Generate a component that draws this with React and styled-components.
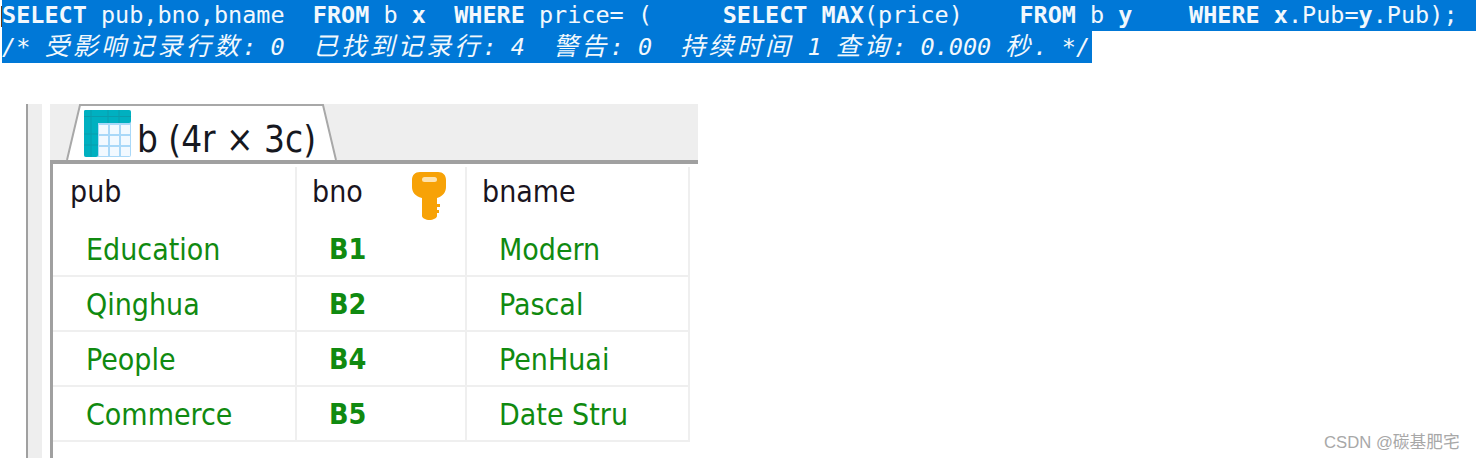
import React from "react";
import styled, { createGlobalStyle } from "styled-components";

const GlobalStyle = createGlobalStyle`
  html, body {
    margin: 0;
    padding: 0;
    background: #fff;
  }
  body {
    width: 1476px;
    height: 458px;
    overflow: hidden;
    position: relative;
  }
`;

const SqlBlock = styled.div`
  position: relative;
  padding-left: 2px;
  font-family: "DejaVu Sans Mono", "Noto Sans CJK SC", monospace;
  font-size: 23.47px;
  color: #f2f8fd;
  white-space: pre;
`;

const Caret = styled.div`
  position: absolute;
  left: 1px;
  top: 6px;
  width: 1px;
  height: 21px;
  background: #6b3a10;
`;

const SqlLine = styled.div`
  display: ${p => (p.$fit ? "table" : "block")};
  height: ${p => p.$h}px;
  line-height: ${p => p.$h}px;
  padding-right: ${p => (p.$fit ? 2 : 0)}px;
  background: #0078d7;
  font-style: ${p => (p.$comment ? "italic" : "normal")};
`;

const Keyword = styled.span`
  font-weight: bold;
`;

const Cjk = styled.span`
  font-family: "Noto Sans CJK SC", sans-serif;
  font-size: 25px;
  letter-spacing: 3.26px;
  line-height: 1;
`;

const Panel = styled.div`
  display: flex;
  margin: 41px 0 0 26px;
  height: 354px;
`;

const Rail = styled.div`
  width: 14px;
  margin-right: 8px;
  border-left: 2px solid #a0a0a0;
  background: #eeeeee;
`;

const Content = styled.div`
  width: 648px;
  display: flex;
  flex-direction: column;
`;

const TabBar = styled.div`
  height: 56px;
  flex: none;
  background: #eeeeee;
  border-bottom: 4px solid #a0a0a0;
  padding-left: 16px;
  display: flex;
  align-items: flex-end;
`;

const Tab = styled.div`
  position: relative;
  width: 271px;
  height: 56px;
  display: flex;
  align-items: center;
  gap: 6px;
  padding-left: 18px;
  box-sizing: border-box;
  font-family: "DejaVu Sans", sans-serif;
  font-stretch: condensed;
  font-size: 36.6px;
  color: #16181f;
`;

const TabShape = styled.svg`
  position: absolute;
  left: 0;
  top: 0;
`;

const TabIcon = styled.svg`
  position: relative;
  flex: none;
  margin-top: 2px;
`;

const TabLabel = styled.span`
  position: relative;
  margin-top: 15px;
  white-space: pre;
`;

const Grid = styled.div`
  flex: 1;
  display: grid;
  grid-template-columns: 244px 170px 223px;
  grid-template-rows: 58px repeat(4, 55px);
  align-content: start;
  border-left: 3px solid #a0a0a0;
  font-family: "DejaVu Sans", sans-serif;
  font-stretch: condensed;
  font-size: 30px;
`;

const HeadCell = styled.div`
  display: flex;
  align-items: center;
  justify-content: space-between;
  padding: 0 19px 6px ${p => p.$pad}px;
  margin-top: 3px;
  border-right: 2px solid #efefef;
  color: #1a1420;
`;

const Cell = styled.div`
  display: flex;
  align-items: center;
  padding: 1px 0 0 ${p => p.$pad}px;
  border-right: 2px solid #efefef;
  border-bottom: 2px solid #efefef;
  color: #108a10;
  font-weight: ${p => (p.$key ? "bold" : "normal")};
  font-size: ${p => (p.$key ? 28.5 : 30)}px;
`;

const KeySvg = styled.svg`
  flex: none;
  margin-top: 8px;
`;

const Watermark = styled.div`
  position: absolute;
  left: 1324px;
  top: 429px;
  font-family: "Liberation Sans", "Noto Sans CJK SC", sans-serif;
  font-size: 16.7px;
  color: #a8a8a8;
  white-space: pre;
`;

const rows = [
  ["Education", "B1", "Modern"],
  ["Qinghua", "B2", "Pascal"],
  ["People", "B4", "PenHuai"],
  ["Commerce", "B5", "Date Stru"],
];

function TableIcon() {
  const cells = [];
  for (let r = 0; r < 3; r++) {
    for (let c = 0; c < 3; c++) {
      cells.push(<rect key={`${r}-${c}`} x={15 + c * 11} y={15 + r * 11} width={9} height={9} fill="#f2f9ff" />);
    }
  }
  return (
    <TabIcon width="47" height="47" viewBox="0 0 47 47">
      <rect x="0" y="0" width="47" height="47" rx="2" fill="#a9d8f8" />
      <rect x="0" y="0" width="47" height="13" rx="2" fill="#00b0c0" />
      <rect x="0" y="0" width="14" height="47" rx="2" fill="#00b0c0" />
      <path d="M0 6.5H47M0 24H14M0 35H14M7 0V47M24 0V13M35 0V13" stroke="#0a9cac" strokeWidth="1" />
      {cells}
    </TabIcon>
  );
}

function KeyIcon() {
  return (
    <KeySvg width="34" height="48" viewBox="0 0 34 48">
      <path
        d="M8 0H26C31 0 34 3 34 8V15C34 20 31 24 25 26V32H28V35H25V38H27V41H25V44C25 46 21 48 17.5 48C14 48 10 46 10 44V26C3 24 0 20 0 15V8C0 3 3 0 8 0Z"
        fill="#f7a207"
      />
      <rect x="10" y="5" width="15" height="5" rx="2.5" fill="#fde2ae" />
    </KeySvg>
  );
}

export default function App() {
  return (
    <>
      <GlobalStyle />
      <SqlBlock>
        <Caret />
        <SqlLine $h={31}>
          <Keyword>SELECT</Keyword> pub,bno,bname  <Keyword>FROM</Keyword> b <Keyword>x</Keyword>  <Keyword>WHERE</Keyword> price= (     <Keyword>SELECT</Keyword> <Keyword>MAX</Keyword>(price)    <Keyword>FROM</Keyword> b <Keyword>y</Keyword>    <Keyword>WHERE</Keyword> <Keyword>x</Keyword>.Pub=<Keyword>y</Keyword>.Pub);
        </SqlLine>
        <SqlLine $h={32} $fit $comment>
          /* <Cjk>受影响记录行数</Cjk>: 0  <Cjk>已找到记录行</Cjk>: 4  <Cjk>警告</Cjk>: 0  <Cjk>持续时间</Cjk> 1 <Cjk>查询</Cjk>: 0.000 <Cjk>秒</Cjk>. */
        </SqlLine>
      </SqlBlock>
      <Panel>
        <Rail />
        <Content>
          <TabBar>
            <Tab>
              <TabShape width="271" height="56" viewBox="0 0 271 56">
                <path d="M1 56L14 1H257L270 56" fill="#fff" stroke="#a8a8a8" strokeWidth="2" />
              </TabShape>
              <TableIcon />
              <TabLabel>b (4r × 3c)</TabLabel>
            </Tab>
          </TabBar>
          <Grid>
            <HeadCell $pad={17}>pub</HeadCell>
            <HeadCell $pad={15}>bno<KeyIcon /></HeadCell>
            <HeadCell $pad={15}>bname</HeadCell>
            {rows.map(r => (
              <React.Fragment key={r[1]}>
                <Cell $pad={33}>{r[0]}</Cell>
                <Cell $pad={32} $key>{r[1]}</Cell>
                <Cell $pad={32}>{r[2]}</Cell>
              </React.Fragment>
            ))}
          </Grid>
        </Content>
      </Panel>
      <Watermark>CSDN @碳基肥宅</Watermark>
    </>
  );
}
